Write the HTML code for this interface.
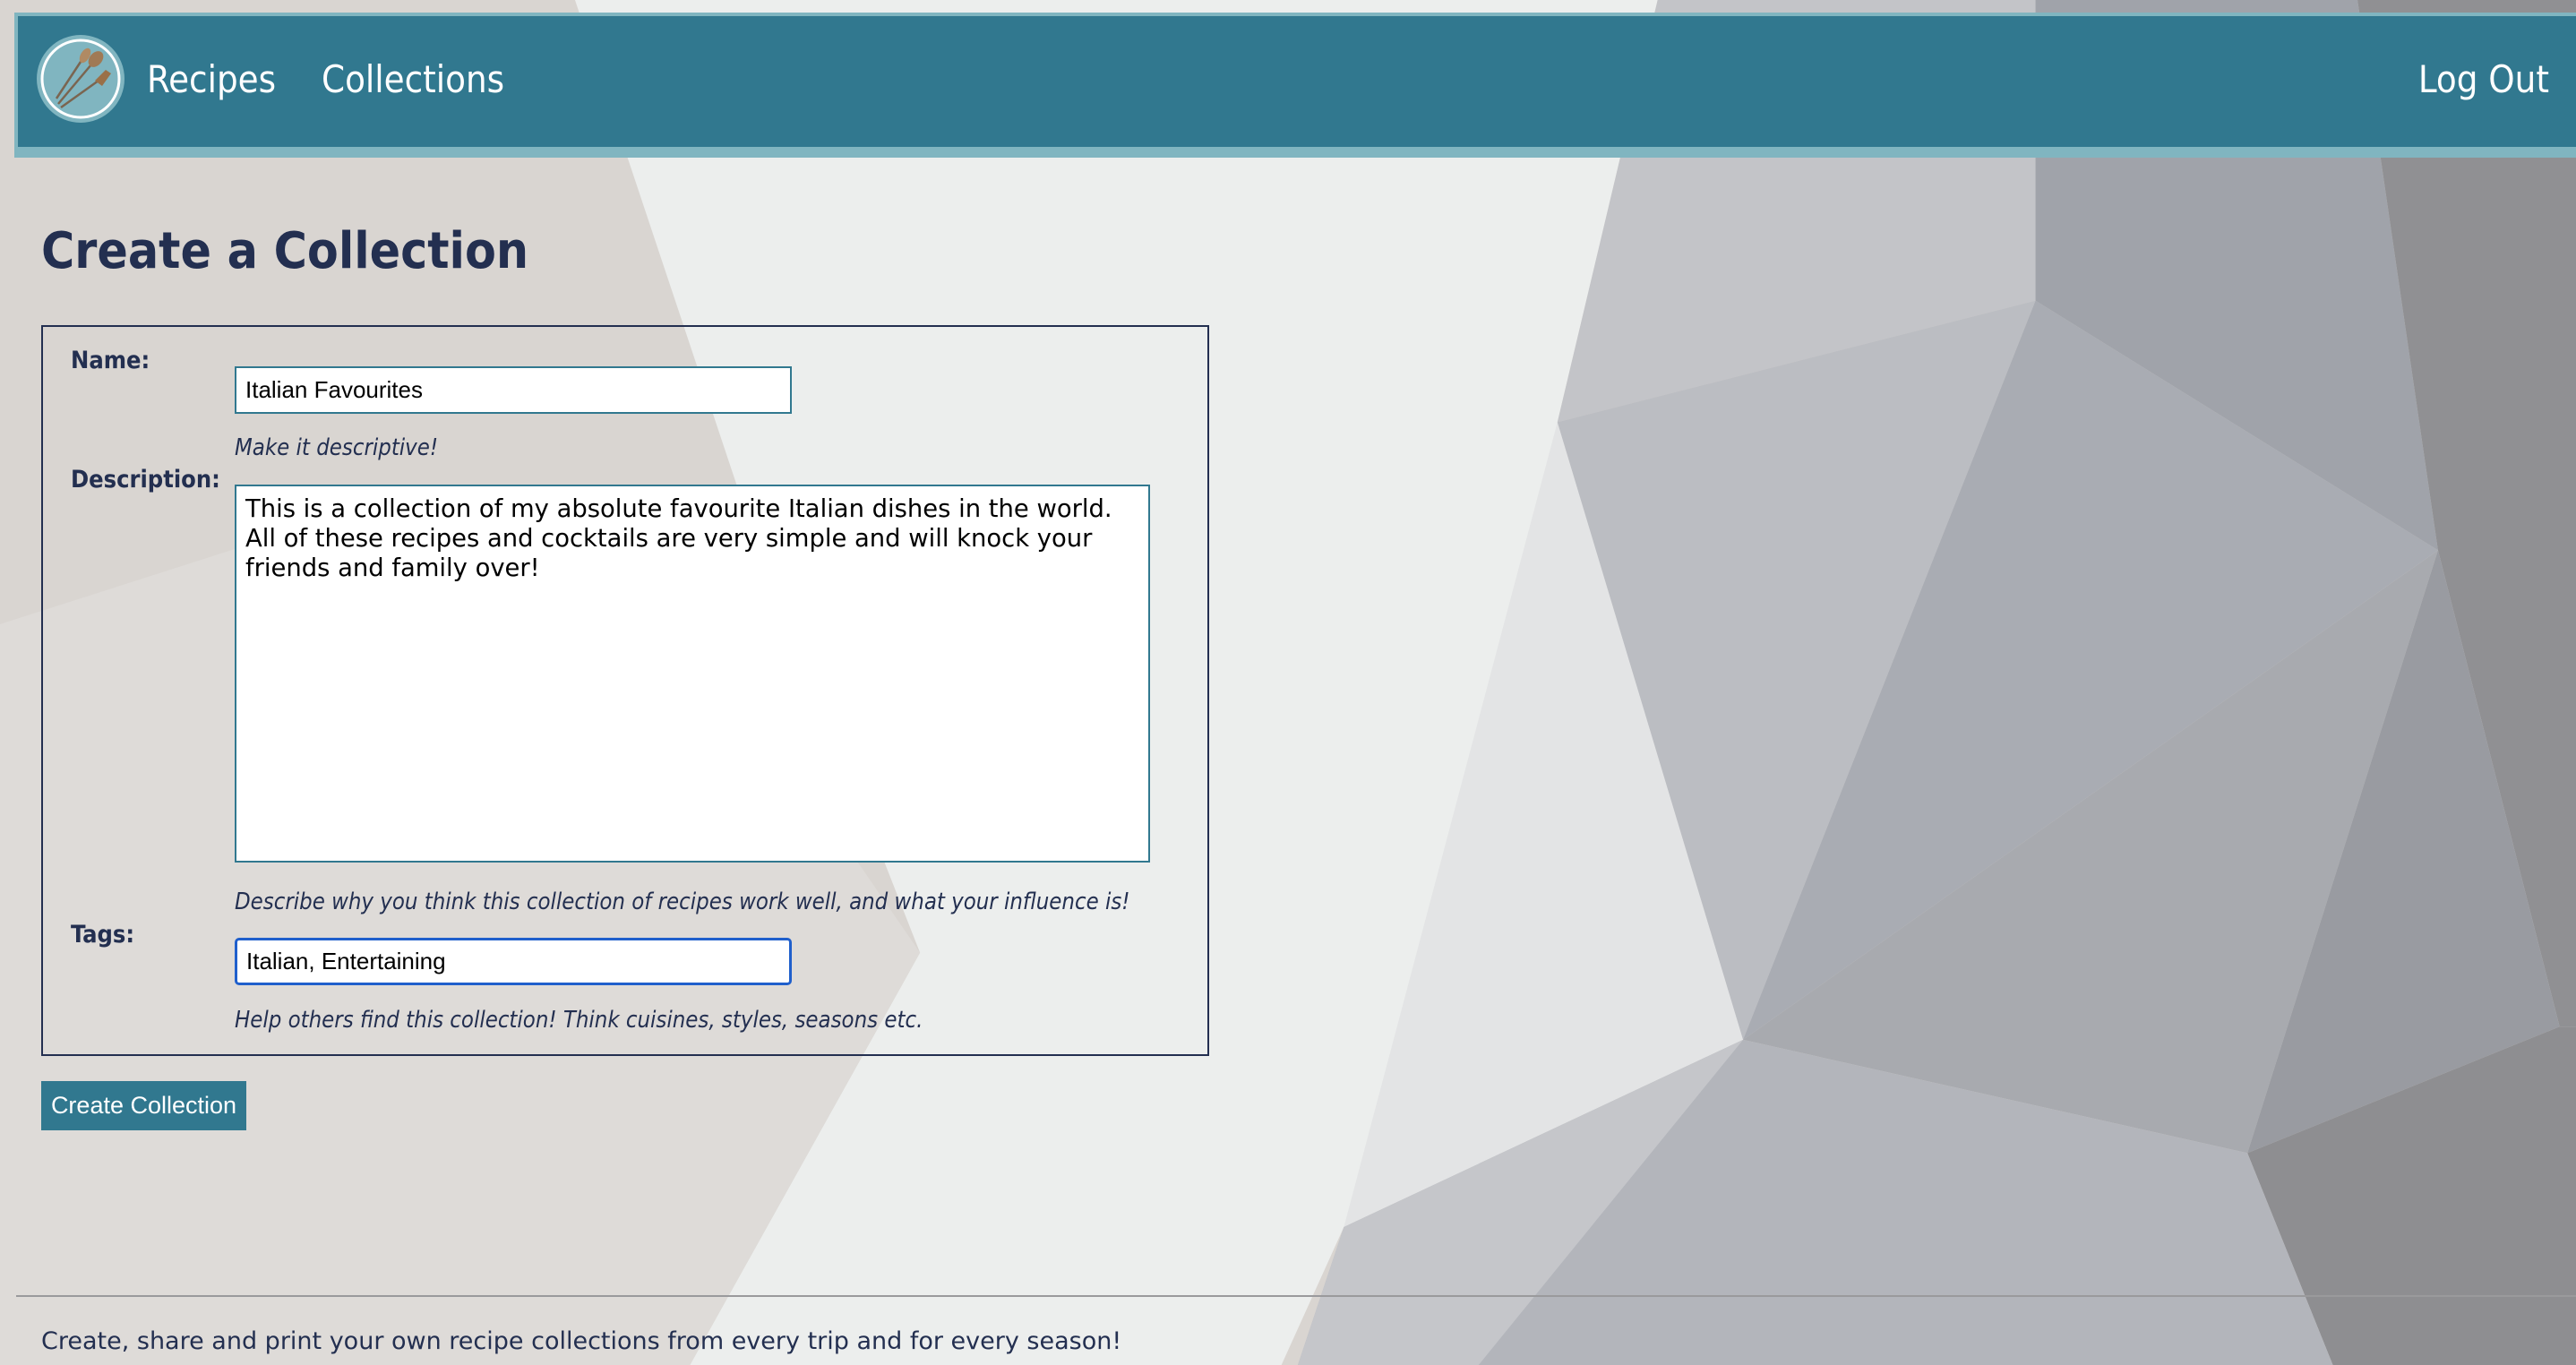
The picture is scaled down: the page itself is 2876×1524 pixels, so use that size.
<!DOCTYPE html>
<html><head><meta charset="utf-8">
<style>
html,body{margin:0;padding:0;width:2876px;height:1524px;overflow:hidden;position:relative;font-family:"DejaVu Sans","Liberation Sans",sans-serif;}
#bg{position:absolute;left:0;top:0;width:2876px;height:1524px;}
.abs{position:absolute;}
.hdr{left:16px;top:14px;right:0;height:162px;background:#80b5c0;}
.hdr-in{left:20px;top:18px;right:0;height:146px;background:#31788f;}
.nav{color:#fff;font-size:41.5px;top:64px;font-family:"DejaVu Sans Condensed","DejaVu Sans",sans-serif;}
.lbl{color:#232f50;font-weight:bold;font-size:27px;font-family:"DejaVu Sans Condensed","DejaVu Sans",sans-serif;left:79px;}
.help{color:#232f50;font-style:italic;font-size:25.5px;left:262px;font-family:"DejaVu Sans Condensed","DejaVu Sans",sans-serif;}
.inp{background:#fff;border:2px solid #31788f;box-sizing:border-box;font-family:"Liberation Sans",sans-serif;font-size:26px;color:#000;padding-left:10px;line-height:49px;}
</style></head><body>
<svg id="bg" viewBox="0 0 1568 831" preserveAspectRatio="none">
<rect width="1568" height="831" fill="#d9d5d1"/>
<polygon points="350,0 1009,0 948,257 1061,633 818,747 780,831 420,831 560,580 450,300" fill="#eceeed"/>
<polygon points="0,380 250,300 450,420 560,580 420,831 0,831" fill="#dedbd8"/>
<polygon points="948,257 1061,633 818,747" fill="#e3e4e5"/>
<polygon points="1009,0 1239,0 1239,183 948,257" fill="#c3c4c8"/>
<polygon points="948,257 1239,183 1061,633" fill="#bbbdc2"/>
<polygon points="1239,183 1484,335 1061,633" fill="#a9acb3"/>
<polygon points="1239,0 1435,0 1484,335 1239,183" fill="#a0a3aa"/>
<polygon points="1435,0 1568,0 1568,625 1558,625 1484,335" fill="#909093"/>
<polygon points="1061,633 1484,335 1368,702" fill="#a8aaaf"/>
<polygon points="1484,335 1558,625 1368,702" fill="#999ba1"/>
<polygon points="1368,702 1558,625 1568,625 1568,831 1420,831" fill="#8e8e91"/>
<polygon points="818,747 1061,633 1368,702 1420,831 790,831" fill="#b3b5bb"/>
<polygon points="790,831 818,747 1061,633 900,831" fill="#c5c6ca"/>
</svg>

<div class="abs hdr"></div>
<div class="abs hdr-in"></div>
<svg class="abs" style="left:40px;top:38px" width="100" height="100" viewBox="0 0 100 100">
<circle cx="50" cy="50" r="49" fill="#80b5c0"/>
<circle cx="50" cy="50" r="43" fill="#80b5c0" stroke="#fff" stroke-width="3"/>
<line x1="23" y1="72" x2="52" y2="28" stroke="#7a6550" stroke-width="2.5"/>
<ellipse cx="55" cy="24" rx="5" ry="9" fill="#b08a63" transform="rotate(30 55 24)"/>
<line x1="25" y1="78" x2="62" y2="34" stroke="#7a6550" stroke-width="2.5"/>
<ellipse cx="67" cy="28" rx="7" ry="10" fill="#a07a55" transform="rotate(40 67 28)"/>
<line x1="28" y1="82" x2="70" y2="52" stroke="#7a6550" stroke-width="2.5"/>
<polygon points="66,52 78,40 84,44 74,58" fill="#9a7048"/>
</svg>
<div class="abs nav" style="left:164px;">Recipes</div>
<div class="abs nav" style="left:359px;">Collections</div>
<div class="abs nav" style="right:30px;">Log Out</div>

<div class="abs" style="left:46px;top:248px;font-size:56.5px;font-weight:bold;color:#232f50;font-family:'DejaVu Sans Condensed','DejaVu Sans',sans-serif;">Create a Collection</div>

<div class="abs" style="left:46px;top:363px;width:1304px;height:816px;border:2px solid #232f50;box-sizing:border-box;"></div>
<div class="abs lbl" style="top:387px;">Name:</div>
<div class="abs inp" style="left:262px;top:409px;width:622px;height:53px;">Italian Favourites</div>
<div class="abs help" style="top:485px;">Make it descriptive!</div>
<div class="abs lbl" style="top:520px;">Description:</div>
<div class="abs inp" style="left:262px;top:541px;width:1022px;height:422px;line-height:33px;padding-top:9px;font-family:'DejaVu Sans',sans-serif;font-size:27.4px;">This is a collection of my absolute favourite Italian dishes in the world.<br>All of these recipes and cocktails are very simple and will knock your<br>friends and family over!</div>
<div class="abs help" style="top:992px;">Describe why you think this collection of recipes work well, and what your influence is!</div>
<div class="abs lbl" style="top:1028px;">Tags:</div>
<div class="abs inp" style="left:262px;top:1047px;width:622px;height:53px;border:3px solid #1f5fcc;border-radius:5px;line-height:47px;">Italian, Entertaining</div>
<div class="abs help" style="top:1124px;">Help others find this collection! Think cuisines, styles, seasons etc.</div>

<div class="abs" style="left:46px;top:1207px;width:229px;height:55px;background:#31788f;color:#fff;font-family:'Liberation Sans',sans-serif;font-size:27px;line-height:55px;text-align:center;">Create Collection</div>

<div class="abs" style="left:18px;right:0;top:1446px;height:2px;background:#9a9a9c;"></div>
<div class="abs" style="left:46px;top:1482px;font-size:27px;color:#232f50;">Create, share and print your own recipe collections from every trip and for every season!</div>
</body></html>
